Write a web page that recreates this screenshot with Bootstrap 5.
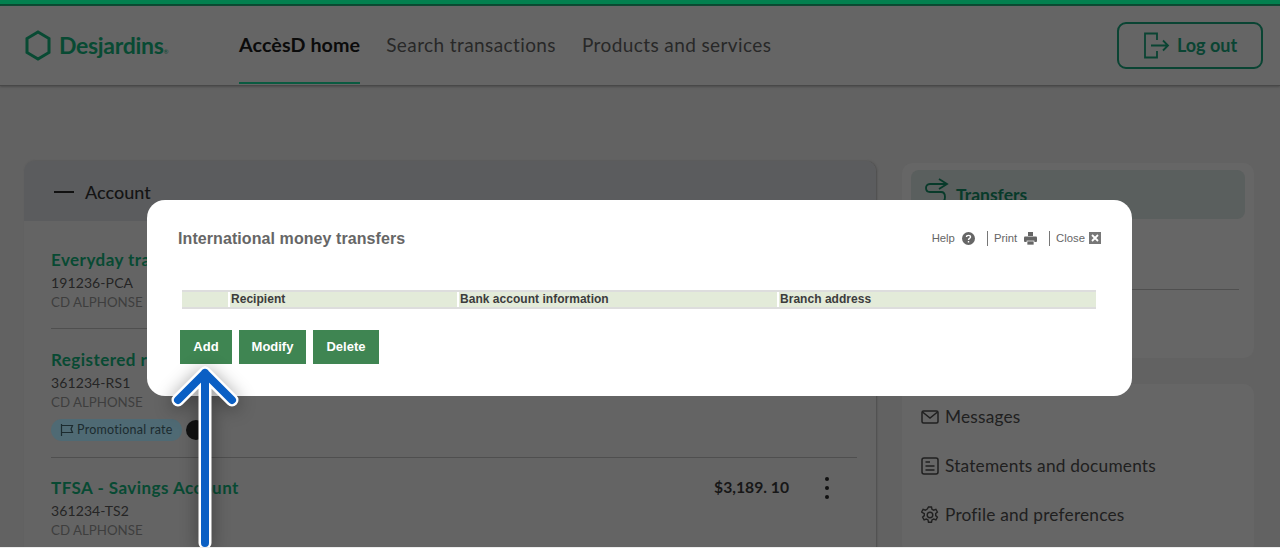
<!DOCTYPE html>
<html lang="en">
<head>
<meta charset="utf-8">
<title>AccèsD</title>
<link href="https://cdn.jsdelivr.net/npm/bootstrap@5.3.0/dist/css/bootstrap.min.css" rel="stylesheet">
<style>
html,body{height:548px;overflow:hidden}
body{background:#626262;font-family:Lato,"Noto Sans",sans-serif;color:#1c1c1c;position:relative}
.topbar{height:6px;background:#03804f;border-bottom:2px solid #0a4a32}
.hdr{height:80px;background:#656565;border-bottom:1px solid #484848;box-shadow:0 1px 2px #4c4c4c;padding:0 17px 0 25px}
.logo{width:214px;color:#084a33;font-size:23px;font-weight:700;letter-spacing:-.3px}
.logo sup{font-size:6px;top:-.1em;font-weight:400}
.tabs{gap:26px;height:79px}
.tabitem{font-size:19px;line-height:78px;height:78px;color:#282828;text-decoration:none;letter-spacing:.4px}
.tabitem.on{color:#0b0b0b;font-size:19.700px;font-weight:700;border-bottom:2px solid #0a5a40;letter-spacing:.1px}
.logoutb{width:146px;height:47px;border:2px solid #0a4433;border-radius:9px;color:#0a4433;font-weight:700;font-size:18px;gap:7px;padding:0}
.logoutb:hover{color:#0a4433;border-color:#0a4433}
.pagebody{padding:75px 26px 0 24px;gap:26px}
.acct{width:852px;height:400px;background:#646464;border-radius:10px 10px 0 0;box-shadow:1px 0 2px #4c4c4c;overflow:hidden;flex:none}
.accthead{height:60px;background:#5b5c5e;padding:3px 0 0 30px;font-size:18px;font-weight:500;color:#141414;gap:11px}
.dash{width:20px;height:2px;background:#111;margin-top:-2px}
.rowitem{margin:0 19px 0 27px;border-bottom:1px solid #4f4f4f;position:relative}
.r1{height:108px;padding-top:28px}
.r2{height:129px;padding-top:20px}
.r3{padding-top:19px;border-bottom:0}
.nm{font-size:17px;line-height:21px;font-weight:700;color:#084a33;letter-spacing:.45px}
.num{font-size:14px;line-height:20px;margin-top:3px;color:#252525;letter-spacing:.1px}
.own{font-size:13.300px;line-height:18px;color:#3e3e3e}
.pill{background:#4f6a74;border-radius:12px;height:22px;width:131px;margin-top:8px;padding-left:9px;font-size:12.500px;color:#1c2b2f;gap:3px;letter-spacing:.25px}
.infodot{width:20px;height:20px;background:#111;border-radius:50%;margin-top:8px}
.amt{position:absolute;right:68px;top:18px;font-size:15.700px;font-weight:700;color:#171717}
.kebab{position:absolute;right:28px;top:19px;gap:5px}
.kebab i{display:block;width:4px;height:4px;border-radius:50%;background:#111}
.side{width:352px;flex:none;margin-top:2px}
.sbox{background:#666;border-radius:10px;padding:7px 9px}
.sb1{height:195px}
.sb2{height:170px;margin-top:26px;padding:8.500px 10px 0 19px}
.transf{height:49px;background:#5a5f5e;border-radius:8px;padding:8px 13px;gap:7px;font-size:17.500px;font-weight:700;color:#083a2a}
.sdiv{height:1px;background:#4f4f4f;margin:70px 6px 0 8px}
.slink{height:49px;gap:6px;font-size:17.300px;color:#202020;letter-spacing:.2px}
.dlg{position:absolute;left:147px;top:200px;width:985px;height:196px;background:#fff;border-radius:18px;padding:28px 31px 0 31px;font-family:"Liberation Sans",Arial,sans-serif}
.dtitle{font-size:16px;font-weight:700;color:#666;line-height:19px;margin:0;letter-spacing:.08px}
.dtools{font-size:11.300px;color:#666;height:20px}
.ico{margin-left:7px}
.sep{border-left:1px solid #777;height:15px;margin:0 6px 0 12px}
.dtbl{width:914px;margin:42px 0 0 4px;border-top:2px solid #ddd;border-bottom:2px solid #ddd;table-layout:fixed;border-collapse:separate;border-spacing:0}
.dtbl th{background:#e3ebd9;font-size:12px;line-height:14px;color:#3c3c3c;padding:0 1px 1px;border-left:2px solid #fff;border-top:0;border-bottom:0;height:15px;letter-spacing:.03px}
.dtbl th:first-child{border-left:0}
.dbtns{gap:7px;margin:21px 0 0 2px}
.dbtn{background:#3f8552;color:#fff;border:0;border-radius:0;font-size:13px;font-weight:700;height:34px;padding:0;line-height:34px}
.dbtn:hover{background:#3f8552;color:#fff}
.ptr{position:absolute;left:168px;top:362px;filter:drop-shadow(0 3px 9px rgba(0,0,0,.4))}
.edge{position:absolute;left:0;right:0;top:547px;height:1px;background:#ededed}
</style>
</head>
<body>
<div class="topbar"></div>
<header class="hdr d-flex align-items-center">
  <div class="logo d-flex align-items-center">
    <svg width="26" height="31" viewBox="0 0 26 31" class="me-2 flex-shrink-0"><path d="M13 2 24 8.500V22.500L13 29 2 22.500V8.500Z" fill="none" stroke="#084a33" stroke-width="3"/></svg>
    <span>Desjardins<sup>®</sup></span>
  </div>
  <nav class="tabs d-flex">
    <a class="tabitem on" href="#">AccèsD home</a>
    <a class="tabitem" href="#">Search transactions</a>
    <a class="tabitem" href="#">Products and services</a>
  </nav>
  <button class="btn logoutb ms-auto d-flex align-items-center justify-content-center">
    <svg width="27" height="27" viewBox="0 0 27 27" fill="none" stroke="#0a4433" stroke-width="1.800"><path d="M14 8V1.500H2V25.500H14V19"/><path d="M8 13.500H25M20 8.500l5 5-5 5"/></svg>
    <span>Log out</span>
  </button>
</header>
<main class="pagebody d-flex">
  <section class="acct">
    <div class="accthead d-flex align-items-center"><span class="dash"></span><span>Account</span></div>
    <div class="rowitem r1">
      <div class="nm">Everyday trans</div>
      <div class="num">191236-PCA</div>
      <div class="own">CD ALPHONSE</div>
    </div>
    <div class="rowitem r2">
      <div class="nm">Registered ret</div>
      <div class="num">361234-RS1</div>
      <div class="own">CD ALPHONSE</div>
      <div class="d-flex align-items-center gap-1">
        <div class="pill d-flex align-items-center">
          <svg width="14" height="12" viewBox="0 0 14 12" fill="none" stroke="#1c2b2f" stroke-width="1.200"><path d="M1.500 0V12M1.500 1.500H12.500L11 5l1.500 3.500H1.500"/></svg>
          <span>Promotional rate</span>
        </div>
        <div class="infodot"></div>
      </div>
    </div>
    <div class="rowitem r3">
      <div class="nm">TFSA - Savings Account</div>
      <div class="num">361234-TS2</div>
      <div class="own">CD ALPHONSE</div>
      <div class="amt">$3,189. 10</div>
      <div class="kebab d-flex flex-column"><i></i><i></i><i></i></div>
    </div>
  </section>
  <aside class="side">
    <div class="sbox sb1">
      <div class="transf d-flex">
        <svg width="25" height="30" viewBox="0 0 25 30" fill="none" stroke="#083a2a" stroke-width="1.800"><path d="M15 1l8 5-8 5M23 6H6C3 6 2 8 2 10S3 14 6 14H17C20 14 21 16 21 19S20 24 17 24H3"/></svg>
        <span class="mt-1">Transfers</span>
      </div>
      <div class="sdiv"></div>
    </div>
    <div class="sbox sb2">
      <div class="slink d-flex align-items-center">
        <svg width="18" height="14" viewBox="0 0 18 14" fill="none" stroke="#202020" stroke-width="1.500"><rect x="1" y="1" width="16" height="12" rx="1.500"/><path d="M1.500 2 9 8l7.500-6"/></svg>
        <span>Messages</span>
      </div>
      <div class="slink d-flex align-items-center">
        <svg width="18" height="18" viewBox="0 0 18 18" fill="none" stroke="#202020" stroke-width="1.500"><rect x="1" y="1" width="16" height="16" rx="2"/><path d="M4.500 5H9M4.500 9H13.500M4.500 13H13.500"/></svg>
        <span>Statements and documents</span>
      </div>
      <div class="slink d-flex align-items-center">
        <svg width="18" height="18" viewBox="0 0 18 18" fill="none" stroke="#202020" stroke-width="1.400"><circle cx="9" cy="9" r="2.800"/><path d="M7.500 1h3l.5 2.300 1.700.9 2.200-.8 1.500 2.600-1.700 1.600v2l1.700 1.600-1.500 2.600-2.200-.8-1.700.9-.5 2.300h-3l-.5-2.300-1.700-.9-2.200.8-1.500-2.600 1.700-1.600v-2L.6 6l1.500-2.600 2.200.8L6 3.300z"/></svg>
        <span>Profile and preferences</span>
      </div>
    </div>
  </aside>
</main>

<div class="dlg">
  <div class="d-flex justify-content-between align-items-center">
    <h1 class="dtitle">International money transfers</h1>
    <div class="dtools d-flex align-items-center">
      <span>Help</span>
      <svg class="ico" width="13" height="13" viewBox="0 0 13 13"><circle cx="6.500" cy="6.500" r="6.500" fill="#666"/><path d="M4.500 5C4.500 2.800 8.500 2.800 8.500 5 8.500 6.500 6.500 6.300 6.500 8" fill="none" stroke="#fff" stroke-width="1.400"/><rect x="5.800" y="9" width="1.400" height="1.500" fill="#fff"/></svg>
      <span class="sep"></span>
      <span>Print</span>
      <svg class="ico" width="13" height="13" viewBox="0 0 13 13" fill="#666"><rect x="4" y="0" width="5" height="4"/><rect x="0" y="4.500" width="13" height="5.500" rx="1"/><rect x="3" y="9" width="7" height="4" stroke="#fff" stroke-width=".7"/></svg>
      <span class="sep"></span>
      <span>Close</span>
      <svg class="ms-1" width="12" height="12" viewBox="0 0 12 12"><rect width="12" height="12" fill="#777"/><path d="M3 3l6 6M9 3l-6 6" stroke="#fff" stroke-width="1.800"/></svg>
    </div>
  </div>
  <table class="dtbl">
    <colgroup><col style="width:46px"><col style="width:229px"><col style="width:320px"><col></colgroup>
    <thead><tr><th></th><th>Recipient</th><th>Bank account information</th><th>Branch address</th></tr></thead>
  </table>
  <div class="dbtns d-flex">
    <button class="btn dbtn" style="width:52px">Add</button>
    <button class="btn dbtn" style="width:67px">Modify</button>
    <button class="btn dbtn" style="width:66px">Delete</button>
  </div>
</div>

<svg class="ptr" width="74" height="186" viewBox="0 0 74 186" fill="none">
  <path d="M37 181V11M10 38 37 11 64 38" stroke="#fff" stroke-width="13" stroke-linecap="round" stroke-linejoin="round"/>
  <path d="M37 181V11M10 38 37 11 64 38" stroke="#0a5fc4" stroke-width="8" stroke-linecap="round" stroke-linejoin="round"/>
</svg>
<div class="edge"></div>
</body>
</html>
